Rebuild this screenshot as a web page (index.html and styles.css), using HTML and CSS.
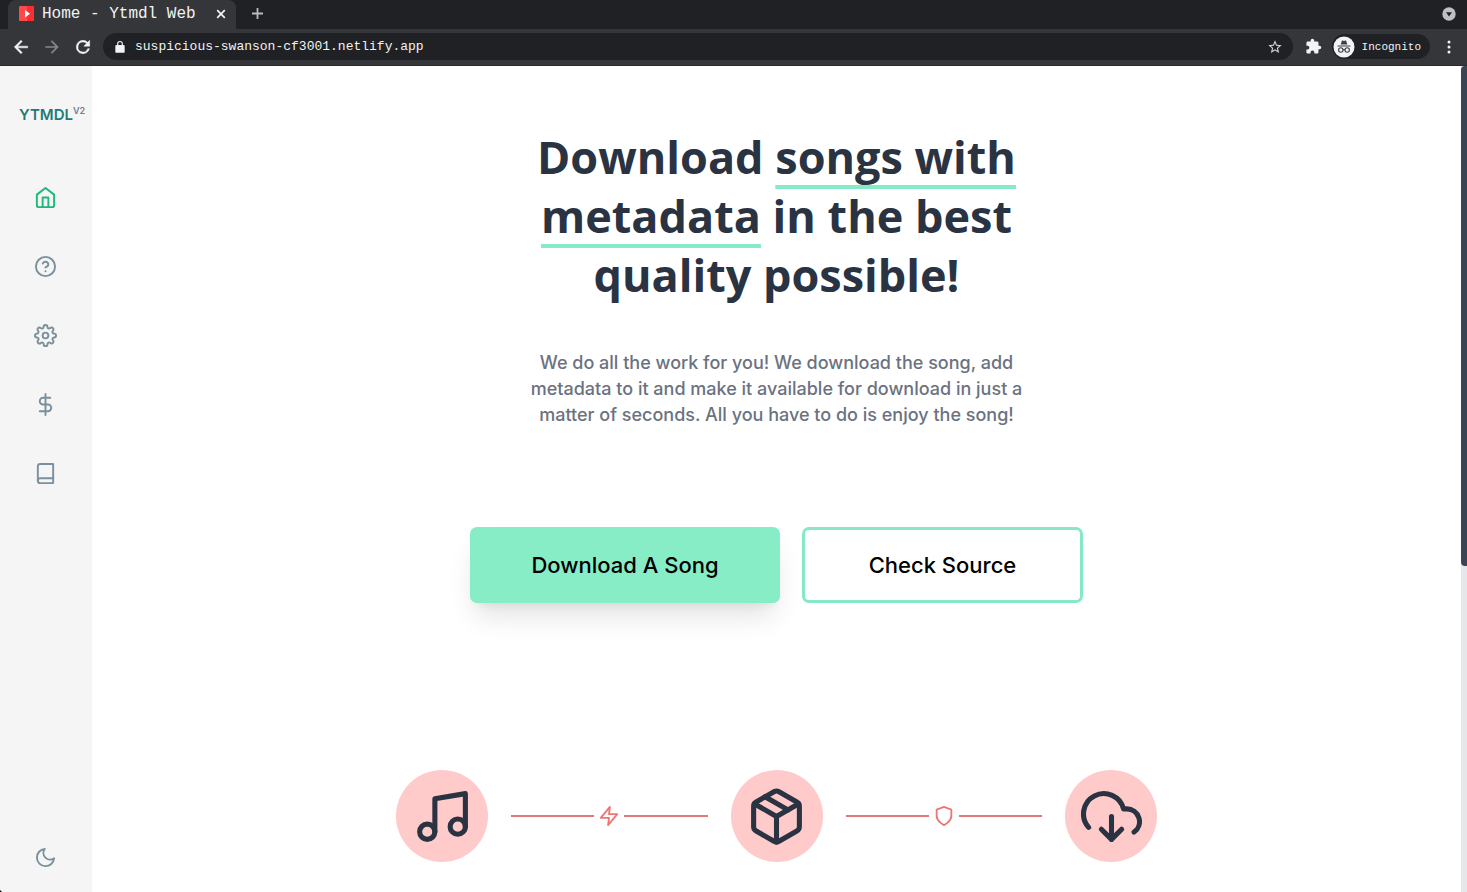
FILE: index.html
```html
<!DOCTYPE html>
<html lang="en">
<head>
<meta charset="utf-8">
<title>Home - Ytmdl Web</title>
<link rel="stylesheet" href="styles.css">
</head>
<body>
<div class="window">
  <header class="browser">
    <div class="tabstrip">
      <div class="tab">
        <svg class="favicon" viewBox="0 0 15 15"><rect width="15" height="15" rx="1" fill="#fe4a4d"/><path d="M8 0h6a1 1 0 0 1 1 1v13a1 1 0 0 1-1 1H8z" fill="#fb2f33"/><path d="M6 4l5 3.700L6 11.500z" fill="#fff"/></svg>
        <span class="tab-title">Home - Ytmdl Web</span>
        <button class="chrome-btn" aria-label="Close tab"><svg width="10" height="10" viewBox="0 0 10 10" stroke="#f1f3f4" stroke-width="1.700"><path d="M1.200 1.200l7.600 7.600M8.800 1.200L1.200 8.800"/></svg></button>
      </div>
      <button class="chrome-btn new-tab" aria-label="New tab"><svg width="13" height="13" viewBox="0 0 13 13" stroke="#b9bbbe" stroke-width="1.800"><path d="M6.500 1v11M1 6.500h11"/></svg></button>
      <button class="chrome-btn tab-search" aria-label="Search tabs"><svg width="14" height="14" viewBox="0 0 14 14"><circle cx="7" cy="7" r="6.700" fill="#bdc1c6"/><path d="M4 5.200h6L7 9.400z" fill="#202124"/></svg></button>
    </div>
    <div class="toolbar">
      <div class="nav-buttons">
        <button class="chrome-btn" aria-label="Back"><svg width="20" height="20" viewBox="0 0 24 24" fill="#f1f3f4" stroke="#f1f3f4" stroke-width=".600"><path d="M20 11H7.830l5.590-5.590L12 4l-8 8 8 8 1.410-1.410L7.830 13H20z"/></svg></button>
        <button class="chrome-btn" aria-label="Forward"><svg width="20" height="20" viewBox="0 0 24 24" fill="#85878a"><path d="M12 4l-1.410 1.410L16.170 11H4v2h12.170l-5.580 5.590L12 20l8-8z"/></svg></button>
        <button class="chrome-btn" aria-label="Reload"><svg width="20" height="20" viewBox="0 0 24 24" fill="#f1f3f4" stroke="#f1f3f4" stroke-width=".600"><path d="M17.650 6.350A7.960 7.960 0 0 0 12 4a8 8 0 1 0 7.730 10h-2.080A6 6 0 1 1 12 6c1.660 0 3.140.690 4.220 1.780L13 11h7V4z"/></svg></button>
      </div>
      <div class="address">
        <svg width="14" height="14" viewBox="0 0 24 24" fill="#f1f3f4"><path d="M18 8.500h-1V6.500a5 5 0 0 0-10 0v2H6a2 2 0 0 0-2 2V20a2 2 0 0 0 2 2h12a2 2 0 0 0 2-2v-9.500a2 2 0 0 0-2-2zM9 6.500a3 3 0 0 1 6 0v2H9z"/></svg>
        <input class="url" type="text" aria-label="Address" value="suspicious-swanson-cf3001.netlify.app">
        <button class="chrome-btn" aria-label="Bookmark"><svg width="16" height="16" viewBox="0 0 24 24" fill="#d5d7da"><path d="M22 9.240l-7.190-.620L12 2 9.190 8.630 2 9.240l5.460 4.730L5.820 21 12 17.270 18.180 21l-1.630-7.030zM12 15.400l-3.760 2.270 1-4.280-3.320-2.880 4.380-.380L12 6.100l1.710 4.040 4.380.380-3.320 2.880 1 4.280z"/></svg></button>
      </div>
      <button class="chrome-btn extensions" aria-label="Extensions"><svg width="17" height="17" viewBox="0 0 24 24" fill="#f1f3f4"><path d="M20.500 11H19V7a2 2 0 0 0-2-2h-4V3.500a2.500 2.500 0 0 0-5 0V5H4a2 2 0 0 0-2 2v3.800h1.500a2.700 2.700 0 0 1 0 5.400H2V20a2 2 0 0 0 2 2h3.800v-1.500a2.700 2.700 0 0 1 5.400 0V22H17a2 2 0 0 0 2-2v-4h1.500a2.500 2.500 0 0 0 0-5z"/></svg></button>
      <button class="incognito">
        <svg width="22" height="22" viewBox="0 0 22 22"><circle cx="11" cy="11" r="10.500" fill="#f1f3f4"/><path d="M7.700 8.500l1.100-3.600c.100-.4.500-.5.800-.4l1.400.4 1.400-.4c.300-.1.700 0 .8.400l1.100 3.600zM4.500 9.500h13v1h-13z" fill="#3c4043"/><g fill="none" stroke="#3c4043" stroke-width="1.100"><circle cx="7.800" cy="14" r="2.200"/><circle cx="14.200" cy="14" r="2.200"/><path d="M10 14q1-.8 2 0"/></g></svg>
        <span>Incognito</span>
      </button>
      <button class="chrome-btn menu" aria-label="Menu"><svg width="4" height="14" viewBox="0 0 4 14" fill="#f1f3f4"><circle cx="2" cy="2" r="1.500"/><circle cx="2" cy="7" r="1.500"/><circle cx="2" cy="12" r="1.500"/></svg></button>
    </div>
  </header>

  <div class="page">
    <aside class="sidebar">
      <a class="logo" href="#">YTMDL<span class="version">V2</span></a>
      <nav class="side-nav">
        <a class="side-link active" href="#" aria-label="Home"><svg class="icon" viewBox="0 0 24 24"><path d="M3 9l9-7 9 7v11a2 2 0 0 1-2 2H5a2 2 0 0 1-2-2z"/><path d="M9 22V12h6v10"/></svg></a>
        <a class="side-link" href="#" aria-label="Help"><svg class="icon" viewBox="0 0 24 24"><circle cx="12" cy="12" r="10"/><path d="M9.090 9a3 3 0 0 1 5.830 1c0 2-3 3-3 3M12 17h.010"/></svg></a>
        <a class="side-link" href="#" aria-label="Settings"><svg class="icon" viewBox="0 0 24 24"><circle cx="12" cy="12" r="3"/><path d="M19.400 15a1.650 1.650 0 0 0 .330 1.820l.060.060a2 2 0 0 1 0 2.830 2 2 0 0 1-2.830 0l-.060-.060a1.650 1.650 0 0 0-1.820-.330 1.650 1.650 0 0 0-1 1.510V21a2 2 0 0 1-2 2 2 2 0 0 1-2-2v-.090A1.650 1.650 0 0 0 9 19.400a1.650 1.650 0 0 0-1.820.330l-.060.060a2 2 0 0 1-2.830 0 2 2 0 0 1 0-2.830l.060-.060a1.650 1.650 0 0 0 .330-1.820 1.650 1.650 0 0 0-1.510-1H3a2 2 0 0 1-2-2 2 2 0 0 1 2-2h.090A1.650 1.650 0 0 0 4.600 9a1.650 1.650 0 0 0-.330-1.820l-.060-.060a2 2 0 0 1 0-2.830 2 2 0 0 1 2.830 0l.060.060a1.650 1.650 0 0 0 1.820.330H9a1.650 1.650 0 0 0 1-1.510V3a2 2 0 0 1 2-2 2 2 0 0 1 2 2v.090a1.650 1.650 0 0 0 1 1.510 1.650 1.650 0 0 0 1.820-.330l.060-.060a2 2 0 0 1 2.830 0 2 2 0 0 1 0 2.830l-.060.060a1.650 1.650 0 0 0-.330 1.820V9a1.650 1.650 0 0 0 1.510 1H21a2 2 0 0 1 2 2 2 2 0 0 1-2 2h-.090a1.650 1.650 0 0 0-1.510 1z"/></svg></a>
        <a class="side-link" href="#" aria-label="Donate"><svg class="icon" viewBox="0 0 24 24"><path d="M12 1v22M17 5H9.500a3.500 3.500 0 0 0 0 7h5a3.500 3.500 0 0 1 0 7H6"/></svg></a>
        <a class="side-link" href="#" aria-label="Docs"><svg class="icon" viewBox="0 0 24 24"><path d="M4 19.500A2.500 2.500 0 0 1 6.500 17H20"/><path d="M6.500 2H20v20H6.500A2.500 2.500 0 0 1 4 19.500v-15A2.500 2.500 0 0 1 6.500 2z"/></svg></a>
      </nav>
      <button class="side-link theme" aria-label="Dark mode"><svg class="icon" viewBox="0 0 24 24"><path d="M21 12.790A9 9 0 1 1 11.210 3 7 7 0 0 0 21 12.790z"/></svg></button>
    </aside>

    <main class="content">
      <h1 class="headline">Download <span class="mark">songs with<br>metadata</span> in the best<br>quality possible!</h1>
      <p class="lead">We do all the work for you! We download the song, add<br>metadata to it and make it available for download in just a<br>matter of seconds. All you have to do is enjoy the song!</p>
      <div class="actions">
        <button class="btn primary">Download A Song</button>
        <button class="btn outline">Check Source</button>
      </div>
      <div class="steps">
        <div class="step"><svg class="icon large" viewBox="0 0 24 24"><path d="M9 18V5l12-2v13"/><circle cx="6" cy="18" r="3"/><circle cx="18" cy="16" r="3"/></svg></div>
        <div class="connector"><svg class="icon small" viewBox="0 0 24 24"><path d="M13 2L3 14h9l-1 8 10-12h-9l1-8z"/></svg></div>
        <div class="step"><svg class="icon large" viewBox="0 0 24 24"><path d="M16.500 9.400L7.500 4.210"/><path d="M21 16V8a2 2 0 0 0-1-1.730l-7-4a2 2 0 0 0-2 0l-7 4A2 2 0 0 0 3 8v8a2 2 0 0 0 1 1.730l7 4a2 2 0 0 0 2 0l7-4A2 2 0 0 0 21 16z"/><path d="M3.270 6.960L12 12.010l8.730-5.050M12 22.080V12"/></svg></div>
        <div class="connector"><svg class="icon small" viewBox="0 0 24 24"><path d="M12 22s8-4 8-10V5l-8-3-8 3v7c0 6 8 10 8 10z"/></svg></div>
        <div class="step"><svg class="icon large" viewBox="0 0 24 24"><path d="M8 17l4 4 4-4M12 12v9"/><path d="M20.880 18.090A5 5 0 0 0 18 9h-1.260A8 8 0 1 0 3 16.290"/></svg></div>
      </div>
    </main>
    <div class="scroll-track"><div class="scroll-thumb"></div></div>
  </div>
</div>
</body>
</html>
```
FILE: styles.css
```css
* { box-sizing: border-box; }

body { margin: 0; background: #000; }

button { border: 0; padding: 0; margin: 0; background: none; font: inherit; color: inherit; cursor: pointer; }
a { color: inherit; text-decoration: none; }
svg { display: block; flex: none; }

.window { display: flex; flex-direction: column; height: 100vh; overflow: hidden; }

/* Browser chrome */
.browser { flex: none; background: #35363a; color: #f1f3f4; font-family: "Liberation Mono", monospace; border-bottom: 1px solid #29292b; }
.tabstrip { display: flex; align-items: center; height: 29px; padding: 0 11px 0 8px; background: #202124; }
.tab { display: flex; align-items: center; width: 228px; height: 29px; padding: 0 10px 2px 11px; background: #35363a; border-radius: 8px 8px 0 0; }
.favicon { width: 15px; height: 15px; margin-right: 8px; }
.tab-title { flex: 1; font-size: 16px; line-height: 20px; white-space: nowrap; }
.chrome-btn { display: flex; align-items: center; justify-content: center; }
.new-tab { margin: 0 auto 2px 15px; }
.tab-search { margin-bottom: 2px; }
.toolbar { display: flex; align-items: center; height: 36px; padding: 0 16px 1px 11px; }
.nav-buttons { display: flex; gap: 11px; margin-right: 10px; }
.address { display: flex; flex: 1; align-items: center; height: 27px; padding: 0 10px; background: #202124; border-radius: 14px; }
.url { flex: 1; margin: 0 8px; padding: 0; border: 0; outline: 0; background: transparent; color: #f1f3f4; font-family: inherit; font-size: 13px; line-height: 18px; }
.extensions { margin: 0 10px 0 12px; }
.incognito { display: flex; align-items: center; height: 25px; padding: 0 9px 0 1px; gap: 7px; background: #202124; border-radius: 13px; font-size: 11px; }
.menu { margin-left: 17px; }

/* Page shell */
.page { display: flex; flex: 1; min-height: 0; background: #fff; border-bottom-left-radius: 4px; overflow: hidden; font-family: "Open Sans", sans-serif; }
.sidebar { display: flex; flex: none; flex-direction: column; align-items: center; width: 92px; padding: 38px 2px 23px 0; background: #f5f5f5; }
.logo { display: flex; align-self: flex-start; margin-left: 19px; color: #1f7a78; font-family: "Inter", sans-serif; font-size: 15px; line-height: 22px; font-weight: 600; }
.version { color: #718096; font-size: 9px; line-height: 14px; }
.side-nav { display: flex; flex-direction: column; gap: 46px; margin-top: 60px; }
.side-link { color: #7a909d; }
.side-link.active { color: #21b67a; }
.theme { margin-top: auto; }
.icon { width: 23px; height: 23px; fill: none; stroke: currentColor; stroke-width: 2; stroke-linecap: round; stroke-linejoin: round; }

.scroll-track { flex: none; width: 6px; background: #e5e7eb; }
.scroll-thumb { height: 60.5%; background: #3b4453; border-radius: 4px 0 0 4px; }

/* Landing content */
.content { display: flex; flex: 1; flex-direction: column; align-items: center; min-width: 0; padding-top: 61px; overflow: hidden; }
.headline { margin: 0; color: #2a3342; font-size: 45px; line-height: 59px; font-weight: 700; text-align: center; }
.mark { text-decoration: underline #85ebc6 4px; text-underline-offset: 11px; text-decoration-skip-ink: none; }
.lead { margin: 46px 0 0; color: #6b7280; font-family: "Inter", sans-serif; font-size: 18px; line-height: 26px; font-weight: 500; text-align: center; }
.actions { display: flex; gap: 22px; margin-top: 99px; }
.btn { height: 76px; border: 3px solid #87e8c8; border-radius: 7px; color: #000; font-family: "Inter", sans-serif; font-size: 22px; font-weight: 500; text-align: center; }
.primary { width: 310px; background: #86edc7; border-color: #86edc7; box-shadow: 0 18px 28px -6px rgba(0, 0, 0, .12), 0 8px 10px -6px rgba(0, 0, 0, .06); }
.outline { width: 281px; background: #fff; }

.steps { display: flex; align-items: center; width: 761px; max-width: 100%; margin-top: 167px; }
.step { display: flex; flex: none; align-items: center; justify-content: center; width: 92px; height: 92px; border-radius: 50%; background: #ffcaca; color: #2a3342; }
.connector { display: flex; flex: 1; align-items: center; gap: 4px; margin: 0 23px; color: #ef7575; }
.connector::before, .connector::after { content: ""; flex: 1; height: 2px; background: #dd7b7b; }
.icon.large { width: 61px; height: 61px; }
.icon.small { width: 22px; height: 22px; }
```
